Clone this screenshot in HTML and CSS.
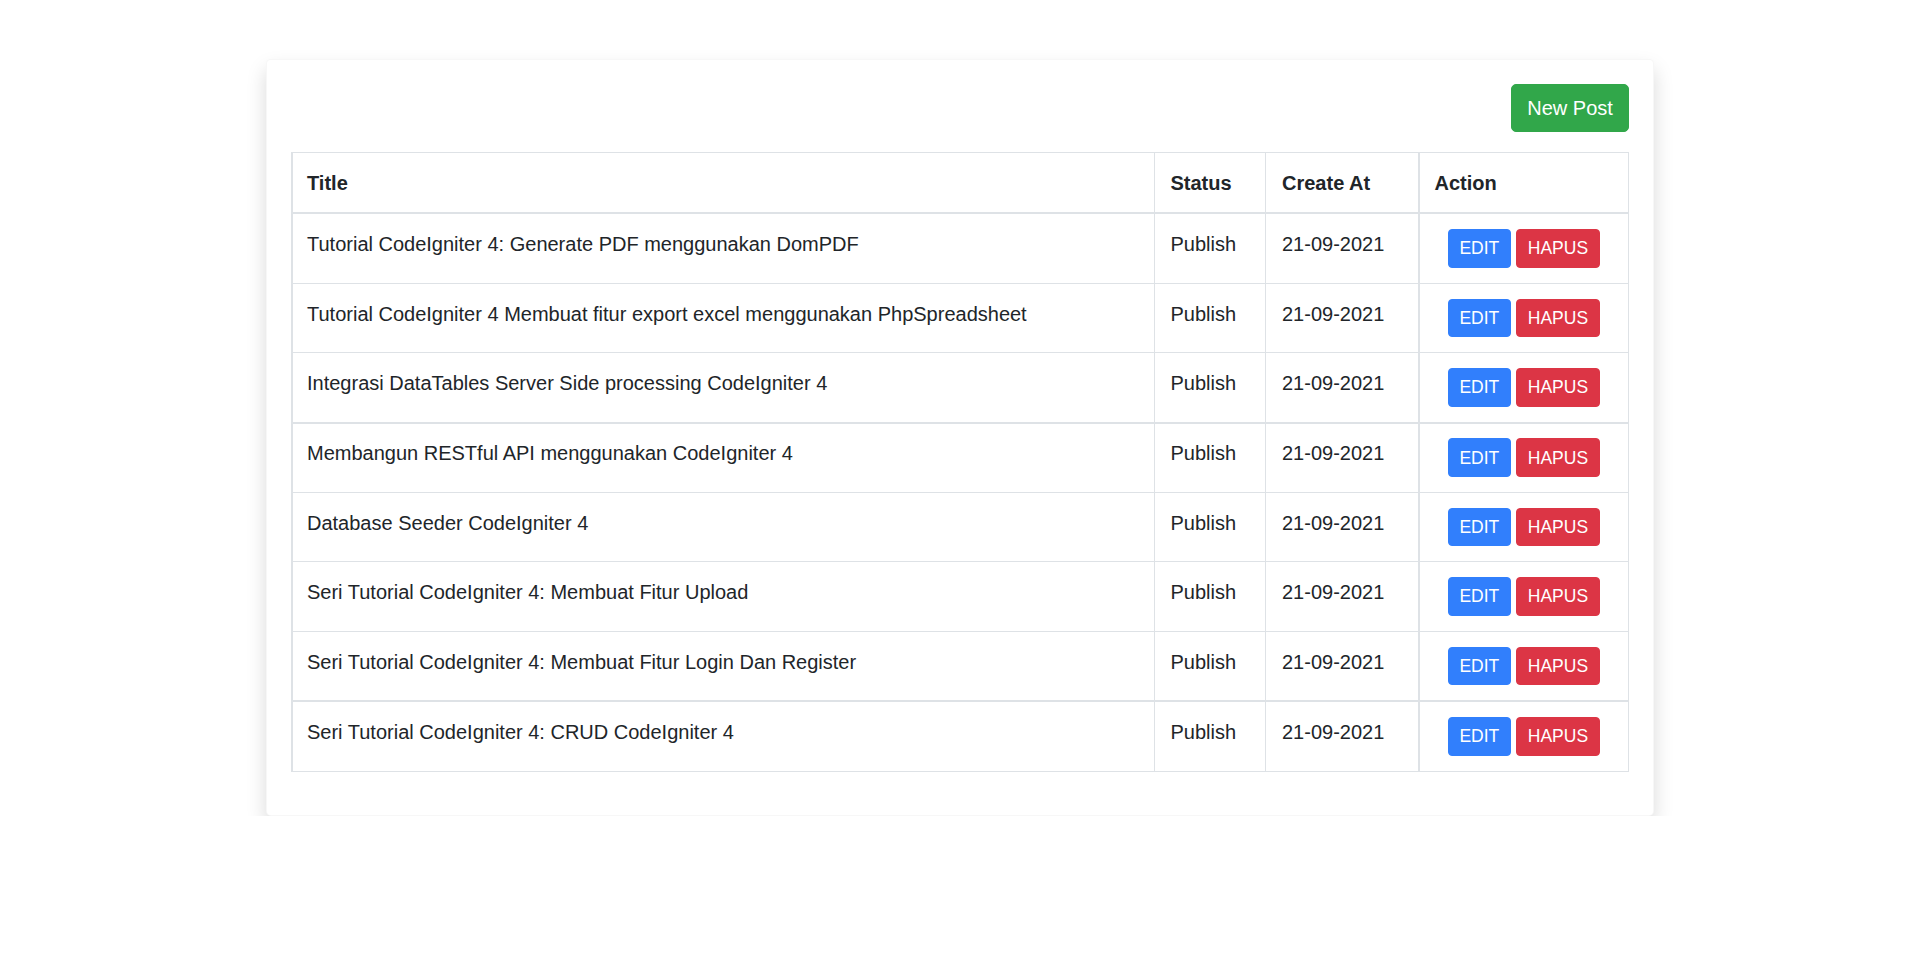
FILE: index.html
```html
<!DOCTYPE html>
<html lang="id">
<head>
<meta charset="utf-8">
<title>Posts</title>
<link rel="stylesheet" href="styles.css">
</head>
<body>
<div class="card">
  <div class="toolbar">
    <a class="btn btn-lg btn-success" href="#">New Post</a>
  </div>
  <table class="table">
    <thead>
      <tr>
        <th class="col-title">Title</th>
        <th class="col-status">Status</th>
        <th class="col-date">Create At</th>
        <th class="col-action">Action</th>
      </tr>
    </thead>
    <tbody>
      <tr>
        <td>Tutorial CodeIgniter 4: Generate PDF menggunakan DomPDF</td>
        <td>Publish</td>
        <td>21-09-2021</td>
        <td class="actions"><a class="btn btn-sm btn-primary" href="#">EDIT</a> <a class="btn btn-sm btn-danger" href="#">HAPUS</a></td>
      </tr>
      <tr>
        <td>Tutorial CodeIgniter 4 Membuat fitur export excel menggunakan PhpSpreadsheet</td>
        <td>Publish</td>
        <td>21-09-2021</td>
        <td class="actions"><a class="btn btn-sm btn-primary" href="#">EDIT</a> <a class="btn btn-sm btn-danger" href="#">HAPUS</a></td>
      </tr>
      <tr class="row-thick">
        <td>Integrasi DataTables Server Side processing CodeIgniter 4</td>
        <td>Publish</td>
        <td>21-09-2021</td>
        <td class="actions"><a class="btn btn-sm btn-primary" href="#">EDIT</a> <a class="btn btn-sm btn-danger" href="#">HAPUS</a></td>
      </tr>
      <tr>
        <td>Membangun RESTful API menggunakan CodeIgniter 4</td>
        <td>Publish</td>
        <td>21-09-2021</td>
        <td class="actions"><a class="btn btn-sm btn-primary" href="#">EDIT</a> <a class="btn btn-sm btn-danger" href="#">HAPUS</a></td>
      </tr>
      <tr>
        <td>Database Seeder CodeIgniter 4</td>
        <td>Publish</td>
        <td>21-09-2021</td>
        <td class="actions"><a class="btn btn-sm btn-primary" href="#">EDIT</a> <a class="btn btn-sm btn-danger" href="#">HAPUS</a></td>
      </tr>
      <tr>
        <td>Seri Tutorial CodeIgniter 4: Membuat Fitur Upload</td>
        <td>Publish</td>
        <td>21-09-2021</td>
        <td class="actions"><a class="btn btn-sm btn-primary" href="#">EDIT</a> <a class="btn btn-sm btn-danger" href="#">HAPUS</a></td>
      </tr>
      <tr class="row-thick">
        <td>Seri Tutorial CodeIgniter 4: Membuat Fitur Login Dan Register</td>
        <td>Publish</td>
        <td>21-09-2021</td>
        <td class="actions"><a class="btn btn-sm btn-primary" href="#">EDIT</a> <a class="btn btn-sm btn-danger" href="#">HAPUS</a></td>
      </tr>
      <tr>
        <td>Seri Tutorial CodeIgniter 4: CRUD CodeIgniter 4</td>
        <td>Publish</td>
        <td>21-09-2021</td>
        <td class="actions"><a class="btn btn-sm btn-primary" href="#">EDIT</a> <a class="btn btn-sm btn-danger" href="#">HAPUS</a></td>
      </tr>
    </tbody>
  </table>
</div>
</body>
</html>
```

FILE: styles.css
```css
*, *::before, *::after {
  box-sizing: border-box;
}

html, body {
  margin: 0;
  padding: 0;
  background: #ffffff;
}

body {
  font-family: "Liberation Sans", Arial, Helvetica, sans-serif;
  font-size: 20px;
  line-height: 30px;
  color: #212529;
  padding: 59px 0 0 2px;
}

.card {
  width: 1388px;
  margin: 0 auto;
  background: #ffffff;
  border: 1px solid rgba(0, 0, 0, 0.03);
  border-radius: 5px;
  padding: 24px;
  box-shadow: 0 10px 20px rgba(0, 0, 0, 0.15);
}

.toolbar {
  display: flex;
  justify-content: flex-end;
  margin-bottom: 20.5px;
}

.btn {
  display: inline-block;
  text-decoration: none;
  color: #ffffff;
  border: 1px solid transparent;
  border-radius: 4px;
  vertical-align: middle;
  text-align: center;
  white-space: nowrap;
}

.btn-lg {
  font-size: 20px;
  line-height: 30px;
  padding: 7.75px 15.2px;
  border-radius: 5px;
}

.btn-sm {
  font-size: 17.5px;
  line-height: 26.25px;
  padding: 5.2px 10.5px;
}

.btn-success {
  background: #31a74a;
  border-color: #31a74a;
}

.btn-primary {
  background: #317ffc;
  border-color: #317ffc;
}

.btn-danger {
  background: #dc3545;
  border-color: #dc3545;
}

.table {
  width: 100%;
  border-collapse: collapse;
  border: 1px solid #dee2e6;
  border-left-width: 2px;
  margin-bottom: 19px;
}

.table th,
.table td {
  border: 1px solid #dee2e6;
  padding: 14.9px 15px 14.9px 16px;
  vertical-align: top;
  text-align: left;
}

.table th {
  font-weight: bold;
  vertical-align: bottom;
  padding-top: 14.65px;
  padding-bottom: 14.65px;
  border-bottom-width: 2px;
}

.table th:first-child,
.table td:first-child {
  border-left-width: 2px;
  padding-left: 14px;
}

.table .row-thick td {
  border-bottom-width: 2px;
}

.col-status {
  width: 111.5px;
}

.col-date {
  width: 153px;
}

.table th.col-action,
.table td.actions {
  border-left-width: 2px;
  padding-left: 15px;
}

.col-action {
  width: 210px;
}

.table td.actions {
  text-align: center;
}
```
